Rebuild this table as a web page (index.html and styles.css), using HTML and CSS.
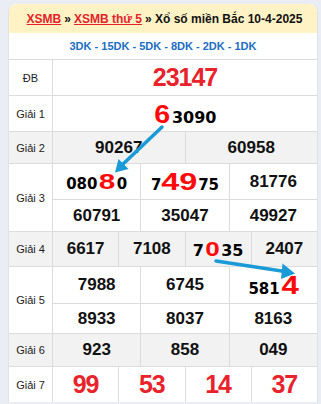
FILE: index.html
```html
<!DOCTYPE html>
<html lang="vi">
<head>
<meta charset="utf-8">
<title>XSMB 10-4-2025</title>
<link rel="stylesheet" href="styles.css">
</head>
<body>
<div class="board">
  <div class="head"><a class="lnk" href="#">XSMB</a> » <a class="lnk" href="#">XSMB thứ 5</a> » Xổ số miền Bắc 10-4-2025</div>
  <div class="dk">3DK - 15DK - 5DK - 8DK - 2DK - 1DK</div>

  <div class="row r-db">
    <div class="lab">ĐB</div>
    <div class="cells n1"><div class="cell"><span class="big">23147</span></div></div>
  </div>

  <div class="row r-g1">
    <div class="lab">Giải 1</div>
    <div class="cells n1"><div class="cell"><span class="hl hl-6">6</span><span class="hv hv16">3090</span></div></div>
  </div>

  <div class="row r-g2 gray">
    <div class="lab">Giải 2</div>
    <div class="cells n2">
      <div class="cell num">90267</div>
      <div class="cell num">60958</div>
    </div>
  </div>

  <div class="row r-g3">
    <div class="lab">Giải 3</div>
    <div class="cells n3 g3rows">
      <div class="cell"><span class="hv">080</span><span class="hl hl-8">8</span><span class="hv">0</span></div>
      <div class="cell"><span class="hv">7</span><span class="hl hl-49">49</span><span class="hv">75</span></div>
      <div class="cell num">81776</div>
      <div class="cell num">60791</div>
      <div class="cell num">35047</div>
      <div class="cell num">49927</div>
    </div>
  </div>

  <div class="row r-g4 gray">
    <div class="lab">Giải 4</div>
    <div class="cells n4">
      <div class="cell num">6617</div>
      <div class="cell num">7108</div>
      <div class="cell"><span class="hv hv16">7</span><span class="hl hl-0">0</span><span class="hv hv16">35</span></div>
      <div class="cell num">2407</div>
    </div>
  </div>

  <div class="row r-g5">
    <div class="lab">Giải 5</div>
    <div class="cells n3 g5rows">
      <div class="cell num">7988</div>
      <div class="cell num">6745</div>
      <div class="cell"><span class="hv">581</span><span class="hl hl-4">4</span></div>
      <div class="cell num">8933</div>
      <div class="cell num">8037</div>
      <div class="cell num">8163</div>
    </div>
  </div>

  <div class="row r-g6 gray">
    <div class="lab">Giải 6</div>
    <div class="cells n3">
      <div class="cell num">923</div>
      <div class="cell num">858</div>
      <div class="cell num">049</div>
    </div>
  </div>

  <div class="row r-g7">
    <div class="lab">Giải 7</div>
    <div class="cells n4">
      <div class="cell red7">99</div>
      <div class="cell red7">53</div>
      <div class="cell red7">14</div>
      <div class="cell red7">37</div>
    </div>
  </div>
</div>

<svg class="arrows" width="321" height="404" viewBox="0 0 321 404" aria-hidden="true">
  <line x1="162" y1="127" x2="121" y2="166" stroke="#1a9ad6" stroke-width="3.5" stroke-linecap="round"/>
  <polygon points="115,172.5 118.5,159 128.5,169" fill="#1a9ad6"/>
  <line x1="216" y1="261" x2="285" y2="271.5" stroke="#1a9ad6" stroke-width="3.5" stroke-linecap="round"/>
  <polygon points="295,273.5 282.5,263.5 281,279" fill="#1a9ad6"/>
</svg>
</body>
</html>
```

FILE: styles.css
```css
html, body {
  margin: 0;
  padding: 0;
}

body {
  background: #eaedf3;
  font-family: "Liberation Sans", Arial, sans-serif;
  color: #222;
  position: relative;
  width: 321px;
  height: 404px;
  overflow: hidden;
}

.board {
  margin: 4px 0 0 8px;
  width: 310px;
  background: #fff;
  border-left: 1px solid #dfe2e8;
  border-right: 1px solid #dfe2e8;
  border-radius: 8px 8px 0 0;
  box-sizing: border-box;
}

.head {
  height: 29px;
  background: #fff3c6;
  border-radius: 8px 8px 0 0;
  display: flex;
  align-items: center;
  justify-content: center;
  font-weight: bold;
  font-size: 12px;
  color: #111;
  white-space: nowrap;
}

.lnk {
  color: #e4232b;
  text-decoration: underline;
  margin: 0 3px;
}

.dk {
  height: 26px;
  display: flex;
  align-items: center;
  justify-content: center;
  font-size: 11px;
  font-weight: bold;
  color: #1b6ec2;
}

.row {
  display: grid;
  grid-template-columns: 44px 1fr;
  border-top: 1px solid #dcdcdc;
  box-sizing: border-box;
}

.lab {
  border-right: 1px solid #dcdcdc;
  display: flex;
  align-items: center;
  justify-content: center;
  font-size: 11px;
  color: #222;
}

.cells {
  display: grid;
  gap: 1px;
  background: #dcdcdc;
}

.n1 { grid-template-columns: 1fr; }
.n2 { grid-template-columns: 1fr 1fr; }
.n3 { grid-template-columns: 1fr 1fr 1fr; }
.n4 { grid-template-columns: 1fr 1fr 1fr 1fr; }

.cell {
  background: #fff;
  display: flex;
  align-items: baseline;
  justify-content: center;
  align-content: center;
  flex-wrap: wrap;
}

.gray .cell,
.gray .lab {
  background: #f2f2f2;
}

.r-db { height: 36px; }
.r-g1 { height: 36px; }
.r-g2 { height: 32px; }
.r-g3 { height: 68px; }
.r-g4 { height: 35px; }
.r-g5 { height: 67px; }
.r-g6 { height: 33px; }
.r-g7 { height: 36px; }

.g3rows { grid-template-rows: 35px 31px; }
.g5rows { grid-template-rows: 36px 29px; }

.num {
  font-weight: bold;
  font-size: 17px;
  color: #111;
}

.big {
  font-weight: bold;
  font-size: 25px;
  letter-spacing: -1px;
  color: #e8232b;
}

.red7 {
  font-weight: bold;
  font-size: 25px;
  letter-spacing: -1px;
  color: #e8232b;
}

.hv {
  font-family: "DejaVu Sans", sans-serif;
  font-weight: bold;
  font-size: 15px;
  color: #000;
}

.hv16 { font-size: 16px; }

.hl {
  display: inline-block;
  font-family: "Liberation Sans", Arial, sans-serif;
  font-weight: bold;
  color: #ff0a0a;
  line-height: 1;
}

.hl-6 { font-size: 26px; transform: scaleX(1.1); margin: 0 3px 0 1px; }
.hl-8 { font-size: 22px; transform: scaleX(1.35); margin: 0 3px 0 4px; }
.hl-49 { font-size: 24px; transform: scaleX(1.35); margin: 0 5px; }
.hl-0 { font-size: 20px; transform: scaleX(1.3); margin: 0 3px; }
.hl-4 { font-size: 26px; transform: scaleX(1.2); margin: 0 1px 0 3px; }

.arrows {
  position: absolute;
  left: 0;
  top: 0;
  pointer-events: none;
}
```
